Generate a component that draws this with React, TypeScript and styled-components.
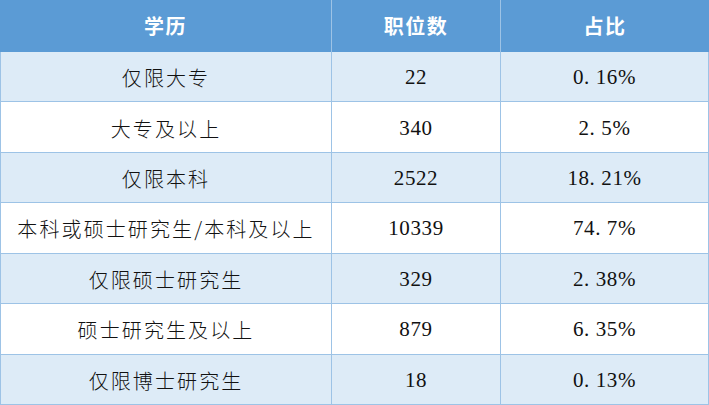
import React from "react";
import styled, { createGlobalStyle } from "styled-components";

const GlobalStyle = createGlobalStyle`
  html, body {
    margin: 0;
    padding: 0;
    background: #ffffff;
  }
  * { box-sizing: border-box; }
`;

const Table = styled.div`
  width: 709px;
  height: 405px;
  display: grid;
  grid-template-rows: 52px repeat(7, 1fr);
  font-family: "Liberation Serif", "Noto Sans CJK SC", serif;
`;

const Row = styled.div<{ $shade?: boolean }>`
  display: grid;
  grid-template-columns: 331px 169px 209px;
  background: ${(p) => (p.$shade ? "#ddebf7" : "#ffffff")};
  border-bottom: 1px solid #9dc3e6;
`;

const HeaderRow = styled.div`
  display: grid;
  grid-template-columns: 331px 169px 209px;
  background: #5b9bd5;
`;

const HeadCell = styled.div<{ $divider?: boolean }>`
  display: flex;
  align-items: center;
  justify-content: center;
  color: #ffffff;
  font-family: "Noto Sans CJK SC", sans-serif;
  font-weight: 700;
  font-size: 20px;
  letter-spacing: 1.5px;
  border-left: ${(p) => (p.$divider ? "1px solid #9dc3e6" : "none")};
  padding-bottom: 2px;
`;

const Cell = styled.div<{ $last?: boolean }>`
  display: flex;
  align-items: center;
  justify-content: center;
  color: #111111;
  font-size: 20px;
  border-left: 1px solid #9dc3e6;
  border-right: ${(p) => (p.$last ? "1px solid #9dc3e6" : "none")};
  padding-top: 2px;
`;

const CjkText = styled.span`
  font-family: "Noto Sans CJK SC", sans-serif;
  font-weight: 300;
  letter-spacing: 2.1px;
`;

const NumText = styled.span`
  font-family: "Liberation Serif", serif;
  font-size: 21px;
  letter-spacing: 0.6px;
`;

const rows: [string, string, string][] = [
  ["仅限大专", "22", "0.16%"],
  ["大专及以上", "340", "2.5%"],
  ["仅限本科", "2522", "18.21%"],
  ["本科或硕士研究生/本科及以上", "10339", "74.7%"],
  ["仅限硕士研究生", "329", "2.38%"],
  ["硕士研究生及以上", "879", "6.35%"],
  ["仅限博士研究生", "18", "0.13%"],
];

const formatPct = (v: string) => v.replace(".", ". ");

export default function App() {
  return (
    <>
      <GlobalStyle />
      <Table>
        <HeaderRow>
          <HeadCell>学历</HeadCell>
          <HeadCell $divider>职位数</HeadCell>
          <HeadCell $divider>占比</HeadCell>
        </HeaderRow>
        {rows.map((r, i) => (
          <Row key={r[0]} $shade={i % 2 === 0}>
            <Cell>
              <CjkText>{r[0]}</CjkText>
            </Cell>
            <Cell>
              <NumText>{r[1]}</NumText>
            </Cell>
            <Cell $last>
              <NumText>{formatPct(r[2])}</NumText>
            </Cell>
          </Row>
        ))}
      </Table>
    </>
  );
}
